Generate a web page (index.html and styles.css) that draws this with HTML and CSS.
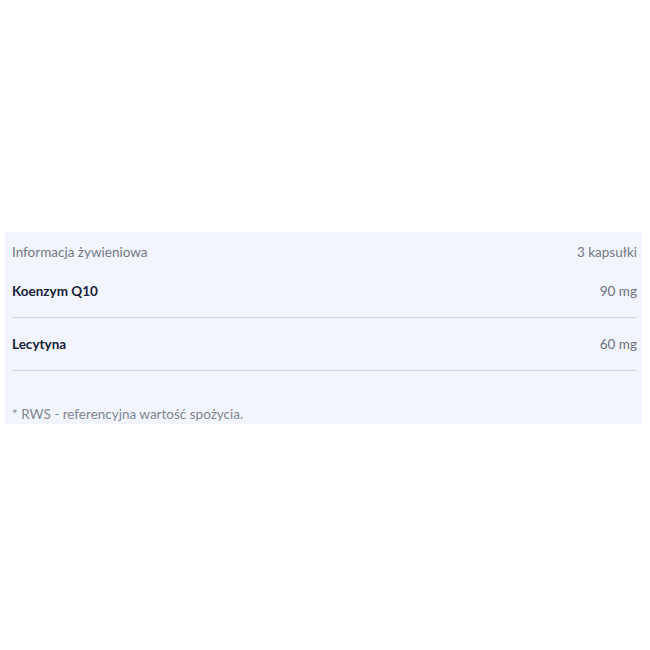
FILE: index.html
```html
<!DOCTYPE html>
<html lang="pl">
<head>
<meta charset="utf-8">
<link rel="stylesheet" href="styles.css">
</head>
<body>
<section class="panel">
  <div class="head">
    <span>Informacja żywieniowa</span>
    <span>3 kapsułki</span>
  </div>
  <div class="row">
    <span class="name">Koenzym Q10</span>
    <span class="val">90 mg</span>
  </div>
  <div class="row">
    <span class="name">Lecytyna</span>
    <span class="val">60 mg</span>
  </div>
  <p class="note">* RWS - referencyjna wartość spożycia.</p>
</section>
</body>
</html>
```
FILE: styles.css
```css
html, body {
  margin: 0;
  padding: 0;
  background: #ffffff;
}
body {
  width: 650px;
  height: 650px;
  font-family: Lato, "Open Sans", sans-serif;
}
.panel {
  margin: 232px 0 0 5px;
  width: 637px;
  height: 192px;
  box-sizing: border-box;
  background: #f2f5fd;
  padding: 0 5px 0 7px;
}
.head {
  display: flex;
  justify-content: space-between;
  align-items: center;
  height: 33px;
  padding-top: 6px;
  box-sizing: border-box;
  font-size: 13.5px;
  color: #727784;
}
.row {
  display: flex;
  justify-content: space-between;
  align-items: center;
  height: 53px;
  border-bottom: 1px solid #d5d8de;
  box-sizing: border-box;
  font-size: 13.5px;
}
.name {
  font-weight: 700;
  color: #18203a;
}
.val {
  color: #6c717d;
}
.note {
  margin: 0;
  padding-top: 35px;
  font-size: 13.5px;
  color: #80858f;
  line-height: 16px;
}
```
